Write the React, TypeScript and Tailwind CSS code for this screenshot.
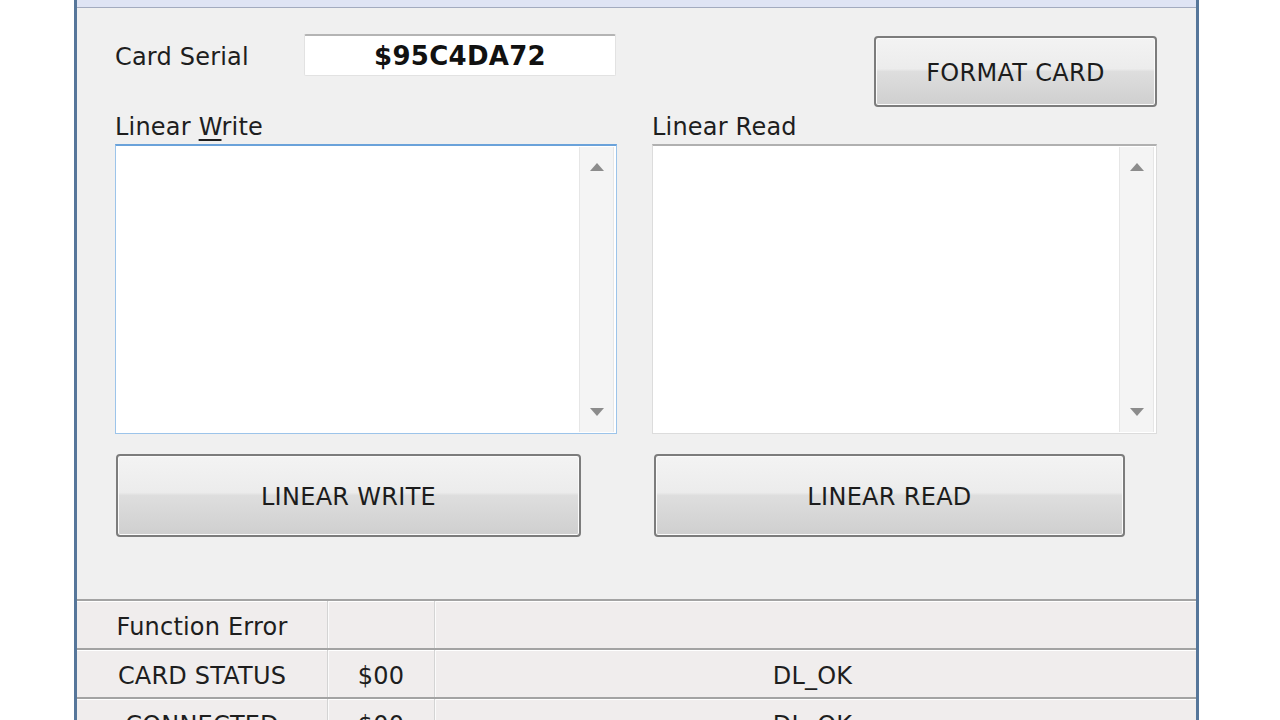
import React from "react";

function ScrollArea({ focused, className }: { focused?: boolean; className?: string }) {
  return (
    <div
      className={
        "flex h-[290px] bg-white border " +
        (focused
          ? "border-[#9cc4ea] border-t-[2px] border-t-[#6aa2da] "
          : "border-[#dcdcdc] border-t-[2px] border-t-[#b0b0b0] ") +
        (className ?? "")
      }
    >
      <div className="flex-1" />
      <div className="w-[35px] my-[1px] mr-[2px] flex flex-col justify-between items-center bg-[#f4f4f4] border-x border-[#e6e6e6] py-[16px]">
        <svg width="14" height="8" viewBox="0 0 14 8">
          <polygon points="7,0 14,8 0,8" fill="#8c8c8c" />
        </svg>
        <svg width="14" height="8" viewBox="0 0 14 8">
          <polygon points="0,0 14,0 7,8" fill="#8c8c8c" />
        </svg>
      </div>
    </div>
  );
}

function Btn({ label, className }: { label: string; className?: string }) {
  return (
    <div
      className={
        "flex items-center justify-center pt-[2px] rounded-[4px] border-2 border-[#7c7c7c] shadow-[inset_0_0_0_1px_#fbfbfb] bg-[linear-gradient(to_bottom,#f3f3f3_0%,#ececec_46%,#dedede_50%,#cfcfcf_100%)] text-[24px] tracking-[0.3px] text-[#1c1c1c] " +
        (className ?? "")
      }
    >
      {label}
    </div>
  );
}

function Row({ a, b, c }: { a: string; b: string; c: string }) {
  return (
    <div className="grid grid-cols-[251px_107px_1fr] h-[49px] border-t-2 border-[#a3a3a3] shadow-[inset_0_1px_0_#ffffff] bg-[#f0eded]">
      <div className="flex items-center justify-center pt-[5px] border-r border-[#d4d4d4] shadow-[1px_0_0_#fbfbfb]">{a}</div>
      <div className="flex items-center justify-center pt-[5px] border-r border-[#d4d4d4] shadow-[1px_0_0_#fbfbfb]">{b}</div>
      <div className="flex items-center justify-center pt-[5px] pr-[6px]">{c}</div>
    </div>
  );
}

export default function App() {
  return (
    <div className="h-[720px] w-[1280px] overflow-hidden bg-white font-['DejaVu_Sans','Verdana',sans-serif] text-[#1e1e1e]">
      <div className="ml-[74px] w-[1125px] h-[720px] flex flex-col border-x-[3px] border-[#56769a] bg-[#f0f0f0]">
        <div className="h-[8px] shrink-0 bg-[#dfe4f4] border-b border-[#a3abbf]" />
        <div className="pl-[38px]">
          <div className="mt-[26px] h-[73px] grid grid-cols-[502px_505px] gap-x-[35px]">
            <div className="flex items-center h-[42px]">
              <div className="w-[189px] pt-[4px] text-[24px] tracking-[0.2px] leading-[28px]">Card Serial</div>
              <div className="w-[312px] h-[42px] flex items-center justify-center pt-[2px] bg-white border border-[#e2e2e2] border-t-2 border-t-[#b4b4b4] rounded-[2px] font-bold text-[26px] tracking-[0.3px] text-[#111]">
                $95C4DA72
              </div>
            </div>
            <div className="pt-[2px] pl-[222px]">
              <Btn label="FORMAT CARD" className="w-[283px] h-[71px]" />
            </div>
          </div>
          <div className="mt-[6px] grid grid-cols-[502px_505px] gap-x-[35px] text-[24px] tracking-[0.2px] leading-[28px]">
            <div>
              Linear <span className="underline underline-offset-[4px] decoration-[2px]">W</span>rite
            </div>
            <div>Linear Read</div>
          </div>
          <div className="mt-[3px] grid grid-cols-[502px_505px] gap-x-[35px]">
            <ScrollArea focused />
            <ScrollArea />
          </div>
          <div className="mt-[20px] grid grid-cols-[502px_505px] gap-x-[35px]">
            <div className="pl-[1px]">
              <Btn label="LINEAR WRITE" className="w-[465px] h-[83px]" />
            </div>
            <div className="pl-[2px]">
              <Btn label="LINEAR READ" className="w-[471px] h-[83px]" />
            </div>
          </div>
        </div>
        <div className="mt-[62px] text-[24px] tracking-[0.2px]">
          <Row a="Function Error" b="" c="" />
          <Row a="CARD STATUS" b="$00" c="DL_OK" />
          <Row a="CONNECTED" b="$00" c="DL_OK" />
        </div>
      </div>
    </div>
  );
}
